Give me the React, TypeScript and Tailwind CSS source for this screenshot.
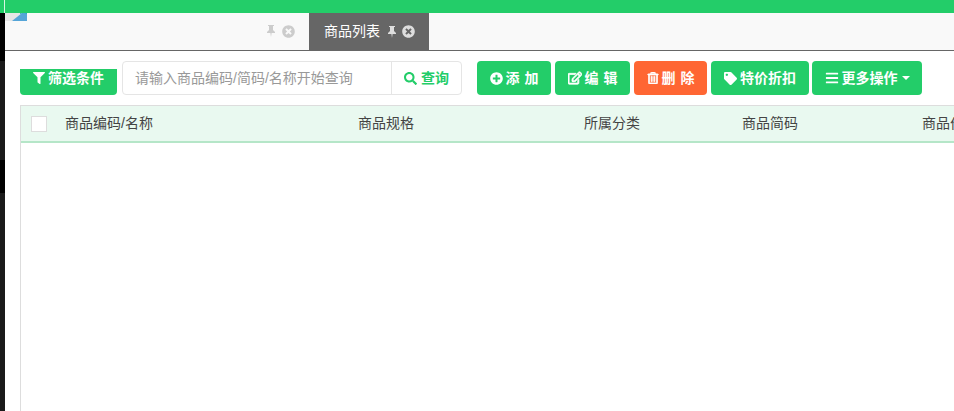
import { FaFilter, FaSearch, FaPlusCircle, FaRegEdit, FaRegTrashAlt, FaTag, FaBars, FaTimesCircle } from "react-icons/fa";

const font = { fontFamily: '"Liberation Sans", "Noto Sans CJK SC", sans-serif' };

function Pin({ className = "" }: { className?: string }) {
  return (
    <svg className={className} width="8" height="12" viewBox="0 0 8 12" fill="currentColor">
      <path d="M1 0 H7 V1 H6 V5 L8 7 V8 H4.6 L4 12 L3.4 8 H0 V7 L2 5 V1 H1 Z" />
    </svg>
  );
}

function Btn({ w, color = "bg-[#23cd69]", icon, children, className = "" }: { w: string; color?: string; icon: React.ReactNode; children: React.ReactNode; className?: string }) {
  return (
    <div className={`${w} ${color} ${className} h-[34px] rounded-[4px] flex items-center justify-center gap-[3px] text-white text-[14px] font-bold [word-spacing:1px] shrink-0`}>
      {icon}
      <span className="flex items-center">{children}</span>
    </div>
  );
}

export default function App() {
  return (
    <div className="w-[954px] h-[411px] overflow-hidden flex flex-col bg-white text-[#333]" style={font}>
      <div className="h-[13px] bg-[#23cd69] shrink-0 flex">
        <div className="w-[4px] shrink-0" />
        <div className="w-px bg-[#d8f5e3]" />
      </div>
      <div className="flex flex-1 min-h-0">
        <div className="w-[5px] shrink-0 flex flex-col">
          <div className="h-[48px] bg-black" />
          <div className="h-[99px] bg-[#1a1a1a]" />
          <div className="h-[33px] bg-black" />
          <div className="flex-1 bg-[#1a1a1a]" />
        </div>
        <div className="flex-1 min-w-0 flex flex-col">
          <div className="h-[38px] shrink-0 bg-[#f9f9f9] border-b border-[#666] flex relative">
            <svg className="absolute left-0 top-0" width="22" height="8" viewBox="0 0 22 8">
              <rect width="22" height="8" fill="#e6e6e6" />
              <path d="M7 8 L17 0 L22 0 L22 8 Z" fill="#55a5d8" />
              <path d="M15 1 Q19 -1 22 1 L22 0 L15 0 Z" fill="#23a9b8" />
            </svg>
            <div className="w-[304px] shrink-0 flex items-center justify-end gap-[7px] pr-[14px] pb-[1px] text-[#ccc]">
              <Pin />
              <FaTimesCircle size={13} />
            </div>
            <div className="w-[120px] shrink-0 h-[37px] bg-[#666] text-white flex items-center pl-[15px] text-[14px]">
              <span>商品列表</span>
              <Pin className="ml-[8px] text-[#ddd]" />
              <FaTimesCircle size={13} className="ml-[6px] text-[#ddd]" />
            </div>
          </div>
          <div className="flex items-start pl-[15px] pt-[10px] shrink-0 h-[54px]">
            <div className="w-[97px] h-[26px] mt-[8px] rounded-b-[4px] bg-[#23cd69] text-white text-[14px] font-bold flex items-center justify-center gap-[3px] pb-[8px] shrink-0">
              <FaFilter size={12} />
              <span>筛选条件</span>
            </div>
            <div className="ml-[5px] w-[340px] h-[34px] border border-[#e5e5e5] rounded-[4px] flex items-center shrink-0">
              <div className="w-[268px] pl-[12px] text-[14px] text-[#999] whitespace-nowrap">请输入商品编码/简码/名称开始查询</div>
              <div className="flex-1 h-full border-l border-[#e5e5e5] flex items-center justify-center gap-[4px] text-[#23cd69] text-[14px] font-bold">
                <FaSearch size={13} />
                <span>查询</span>
              </div>
            </div>
            <div className="ml-[15px] flex gap-[4px]">
              <Btn w="w-[74px]" icon={<FaPlusCircle size={13} />}>添 加</Btn>
              <Btn w="w-[75px]" icon={<FaRegEdit size={14} stroke="currentColor" strokeWidth={30} />}>编 辑</Btn>
              <Btn w="w-[73px]" color="bg-[#ff6633]" icon={<FaRegTrashAlt size={12} stroke="currentColor" strokeWidth={30} />}>删 除</Btn>
              <Btn w="w-[98px]" icon={<FaTag size={13} />}>特价折扣</Btn>
              <Btn w="w-[110px]" className="-ml-px" icon={<FaBars size={14} />}>
                更多操作
                <span className="ml-[4px] w-0 h-0 border-x-[4px] border-x-transparent border-t-[4px] border-t-white" />
              </Btn>
            </div>
          </div>
          <div className="ml-[15px] flex-1 min-h-0 border-l border-[#ddd] flex flex-col">
            <div className="h-[38px] shrink-0 bg-[#e9f9f0] border-t border-[#ddd] border-b-2 border-b-[#b5e6c8] flex items-center text-[14px] text-[#444] whitespace-nowrap">
              <div className="w-[16px] h-[16px] ml-[10px] bg-white border border-[#ddd] shrink-0" />
              <div className="w-[293px] ml-[18px] shrink-0">商品编码/名称</div>
              <div className="w-[226px] shrink-0">商品规格</div>
              <div className="w-[158px] shrink-0">所属分类</div>
              <div className="w-[180px] shrink-0">商品简码</div>
              <div className="shrink-0">商品价格</div>
            </div>
            <div className="flex-1 bg-white" />
          </div>
        </div>
      </div>
    </div>
  );
}
